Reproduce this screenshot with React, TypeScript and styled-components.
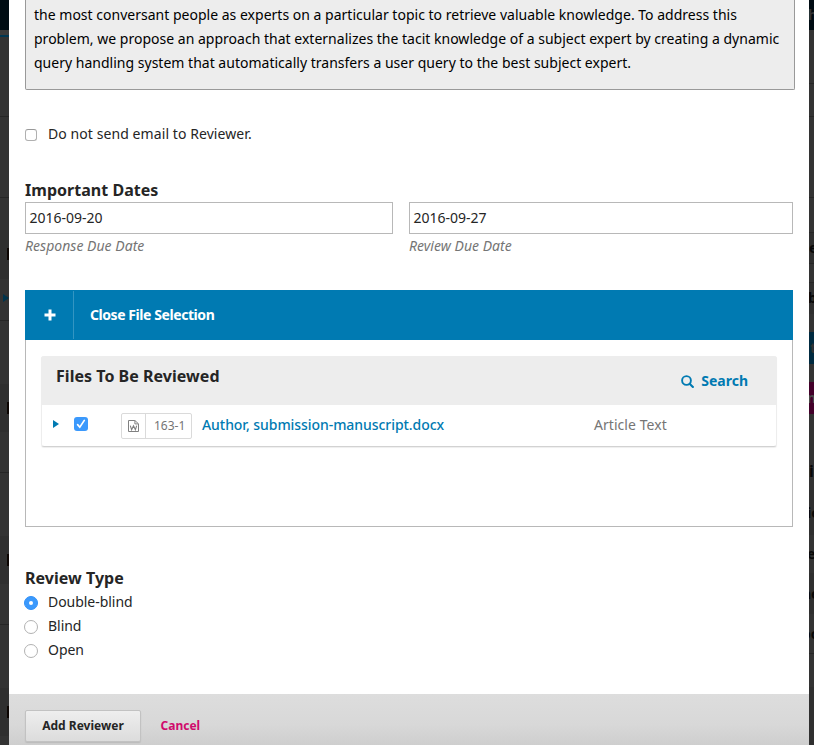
import React from "react";
import styled, { createGlobalStyle } from "styled-components";

const Global = createGlobalStyle`
  *, *::before, *::after { box-sizing: border-box; }
  html, body { margin: 0; padding: 0; overflow: hidden; }
  body {
    background: #333;
    color: #252525;
    font-family: "Noto Sans", "Open Sans", sans-serif;
    font-size: 14px;
    line-height: 24px;
  }
`;

const Page = styled.div`
  display: grid;
  grid-template-columns: 9px 800px 5px;
  width: 814px;
  height: 745px;
  overflow: hidden;
`;

const Edge = styled.div`
  display: flex;
  flex-direction: column;
  height: 745px;
  overflow: hidden;
`;

const Band = styled.div<{ $h: number; $bg?: string; $line?: boolean; $fg?: string; $indent?: number; $shift?: number; $lift?: number; $size?: number }>`
  flex: none;
  display: flex;
  align-items: center;
  height: ${(p) => p.$h}px;
  padding-left: ${(p) => p.$indent ?? 0}px;
  padding-bottom: ${(p) => p.$lift ?? 0}px;
  text-indent: ${(p) => p.$shift ?? 0}px;
  background: ${(p) => p.$bg ?? "#333"};
  border-bottom: ${(p) => (p.$line ? "1px solid #262626" : "none")};
  color: ${(p) => p.$fg ?? "#080808"};
  font-size: ${(p) => p.$size ?? 14}px;
  font-weight: 700;
  white-space: nowrap;
  overflow: hidden;
`;

const EdgeMark = styled.span`
  flex: none;
  width: 4px;
  height: 12px;
  background: #0b0401;
`;

const Modal = styled.main`
  display: flex;
  flex-direction: column;
  height: 745px;
  background: #fff;
`;

const Body = styled.div`
  flex: none;
  display: flex;
  flex-direction: column;
  height: 694px;
  padding: 0 14px 0 16px;
`;

const Message = styled.div`
  flex: none;
  height: 90px;
  padding: 3px 8px 0;
  background: #ededed;
  border: 1px solid #999;
  border-top: 0;
  border-radius: 0 0 2px 2px;
  color: #000;
  white-space: nowrap;
  letter-spacing: 0.01px;
`;

const Line = styled.div`
  height: 24px;
`;

const Choice = styled.label<{ $top?: number; $track?: number }>`
  flex: none;
  display: flex;
  align-items: center;
  height: 24px;
  margin-top: ${(p) => p.$top ?? 0}px;
  letter-spacing: ${(p) => p.$track ?? 0}px;
`;

const Checkbox = styled.span`
  width: 12px;
  height: 12px;
  margin: 2px 11px 0 0;
  background: #fff;
  border: 1px solid #b0b0b0;
  border-top-color: #999;
  border-radius: 3px;
`;

const Radio = styled.span<{ $on?: boolean }>`
  display: grid;
  place-items: center;
  width: 14px;
  height: 14px;
  margin: 2px 10px 0 -1px;
  background: ${(p) => (p.$on ? "#3b99fc" : "#fff")};
  border: 1px solid ${(p) => (p.$on ? "#3190f8" : "#b2b2b2")};
  border-radius: 50%;

  &::after {
    content: "";
    width: 4px;
    height: 4px;
    border-radius: 50%;
    background: #fff;
  }
`;

const Heading = styled.h3<{ $top?: number }>`
  flex: none;
  height: 24px;
  margin: ${(p) => p.$top ?? 0}px 0 0;
  font-size: 16px;
  line-height: 24px;
  font-weight: 700;
  letter-spacing: 0.03px;
`;

const Dates = styled.div`
  flex: none;
  display: grid;
  grid-template-columns: 368px 384px;
  column-gap: 16px;
`;

const DateInput = styled.div`
  height: 32px;
  padding: 0 3.5px;
  border: 1px solid #b8b8b8;
  line-height: 30px;
`;

const Hint = styled.div`
  height: 24px;
  font-style: italic;
  color: #757575;
  letter-spacing: 0.03px;
`;

const Selection = styled.section`
  flex: none;
  width: 768px;
  height: 237px;
  margin-top: 32px;
  border: 1px solid #b8b8b8;
  border-top: 0;
`;

const SelectionBar = styled.div`
  display: flex;
  align-items: center;
  height: 50px;
  margin: 0 -1px;
  background: #007ab2;
  color: #fff;
  font-weight: 700;
`;

const PlusCell = styled.span`
  display: flex;
  align-items: center;
  justify-content: center;
  width: 49px;
  height: 48px;
  padding-left: 1px;
  border-right: 1px solid #3395c2;
`;

const BarTitle = styled.span`
  padding-left: 16px;
  letter-spacing: -0.43px;
`;

const FileGrid = styled.div`
  width: 736px;
  height: 91px;
  margin: 16px 0 0 15px;
  border: 1px solid #ededed;
  border-top: 0;
  border-bottom-color: #d2d2d2;
  border-radius: 3px;
  box-shadow: 0 1px 1px #eee;
`;

const GridHead = styled.div`
  display: flex;
  justify-content: space-between;
  height: 49px;
  margin: 0 -1px;
  padding: 8px 29px 0 15px;
  background: #ededed;
  border-radius: 3px 3px 0 0;
`;

const Search = styled.a`
  display: flex;
  align-items: center;
  height: 24px;
  margin-top: 5px;
  gap: 7px;
  color: #007ab2;
  font-weight: 700;
`;

const FileRow = styled.div`
  display: grid;
  grid-template-columns: 21px 47px 81px 392px 1fr;
  align-items: center;
  height: 38px;
  padding-left: 11px;
`;

const FileBadge = styled.span`
  display: flex;
  align-items: center;
  width: 71px;
  height: 26px;
  margin-top: 3px;
  border: 1px solid #dadada;
  border-radius: 2px;
  color: #757575;
  font-size: 12px;
`;

const BadgeIcon = styled.span`
  display: flex;
  align-items: center;
  justify-content: center;
  width: 24px;
  height: 24px;
  border-right: 1px solid #dadada;
`;

const BadgeId = styled.span`
  padding-left: 8px;
`;

const FileLink = styled.a`
  padding-top: 2px;
  color: #007ab2;
  font-weight: 500;
  letter-spacing: -0.06px;
`;

const Kind = styled.span`
  padding-top: 2px;
  color: #757575;
  letter-spacing: 0.05px;
`;

const Footer = styled.footer`
  flex: none;
  display: flex;
  align-items: flex-start;
  height: 51px;
  padding: 16px;
  background: linear-gradient(#ddd, #d8d8d8 60%, #cecece);
  font-size: 12px;
  font-weight: 700;
`;

const AddButton = styled.button`
  width: 116px;
  height: 32px;
  padding: 0;
  background: linear-gradient(#eee, #dcdcdc);
  border: 1px solid #c2c2c2;
  border-radius: 2px;
  box-shadow: 0 1px 1px #bbb;
  color: #252525;
  font: inherit;
`;

const Cancel = styled.a`
  margin-left: 19.5px;
  line-height: 32px;
  color: #d00a6c;
`;

const Disclosure = ({ color = "#007ab2" }: { color?: string }) => (
  <svg width="6" height="8" viewBox="0 0 6 8" aria-hidden="true">
    <path d="M0 0 6 4 0 8Z" fill={color} />
  </svg>
);

const PlusIcon = () => (
  <svg width="12" height="12" viewBox="0 0 12 12" aria-hidden="true">
    <path d="M4.500.500h3v4h4v3h-4v4h-3v-4h-4v-3h4z" fill="#fff" />
  </svg>
);

const SearchIcon = () => (
  <svg width="13" height="13" viewBox="0 0 13 13" fill="none" stroke="#007ab2" aria-hidden="true">
    <circle cx="5.500" cy="5.500" r="4.400" strokeWidth="1.900" />
    <path d="m8.900 8.900 3 3" strokeWidth="2.100" strokeLinecap="round" />
  </svg>
);

const CheckedBox = () => (
  <svg width="14" height="14" viewBox="0 0 14 14" aria-hidden="true">
    <rect width="14" height="14" rx="3" fill="#3b99fc" />
    <path d="m3.600 7.600 2.200 2.600 4.500-6.800" fill="none" stroke="#fff" strokeWidth="1.700" strokeLinecap="round" />
  </svg>
);

const WordIcon = () => (
  <svg width="11" height="12" viewBox="0 0 11 12" fill="none" stroke="#808080" aria-hidden="true">
    <path d="M.500.500h6.400l3.600 3.300v7.700H.500zM6.900.700v3.200h3.400" />
    <path d="m2.300 5.700 1.300 4 1.900-3.900 1.900 3.900 1.300-4" strokeWidth="1.100" />
  </svg>
);

const lines = [
  "the most conversant people as experts on a particular topic to retrieve valuable knowledge. To address this",
  "problem, we propose an approach that externalizes the tacit knowledge of a subject expert by creating a dynamic",
  "query handling system that automatically transfers a user query to the best subject expert.",
];

const reviewTypes = ["Double-blind", "Blind", "Open"];

export default function App() {
  return (
    <>
      <Global />
      <Page>
        <Edge>
          <Band $h={30} $bg="#000c13" />
          <Band $h={5} $bg="#3a3a3a" />
          <Band $h={2} $bg="#003752" />
          <Band $h={80} $line />
          <Band $h={81} $line />
          <Band $h={32} />
          <Band $h={49} $bg="#2f2f2f" $indent={7} $lift={1}><EdgeMark /></Band>
          <Band $h={42} $line $indent={3} $lift={3}><Disclosure color="#00344c" /></Band>
          <Band $h={63} />
          <Band $h={48} $bg="#2f2f2f" $indent={7}><EdgeMark /></Band>
          <Band $h={41} $line />
          <Band $h={63} />
          <Band $h={48} $bg="#2f2f2f" $indent={7}><EdgeMark /></Band>
          <Band $h={41} $line />
          <Band $h={63} />
          <Band $h={48} $bg="#2f2f2f" $indent={7}><EdgeMark /></Band>
          <Band $h={9} />
        </Edge>
        <Modal>
          <Body>
            <Message>
              {lines.map((line) => <Line key={line}>{line}</Line>)}
            </Message>
            <Choice $top={32} $track={0.08}><Checkbox />Do not send email to Reviewer.</Choice>
            <Heading $top={32}>Important Dates</Heading>
            <Dates>
              <div>
                <DateInput>2016-09-20</DateInput>
                <Hint>Response Due Date</Hint>
              </div>
              <div>
                <DateInput>2016-09-27</DateInput>
                <Hint>Review Due Date</Hint>
              </div>
            </Dates>
            <Selection>
              <SelectionBar>
                <PlusCell><PlusIcon /></PlusCell>
                <BarTitle>Close File Selection</BarTitle>
              </SelectionBar>
              <FileGrid>
                <GridHead>
                  <Heading>Files To Be Reviewed</Heading>
                  <Search><SearchIcon />Search</Search>
                </GridHead>
                <FileRow>
                  <Disclosure />
                  <CheckedBox />
                  <FileBadge>
                    <BadgeIcon><WordIcon /></BadgeIcon>
                    <BadgeId>163-1</BadgeId>
                  </FileBadge>
                  <FileLink>Author, submission-manuscript.docx</FileLink>
                  <Kind>Article Text</Kind>
                </FileRow>
              </FileGrid>
            </Selection>
            <Heading $top={39}>Review Type</Heading>
            {reviewTypes.map((type, i) => (
              <Choice key={type} $track={-0.04}><Radio $on={i === 0} />{type}</Choice>
            ))}
          </Body>
          <Footer>
            <AddButton>Add Reviewer</AddButton>
            <Cancel>Cancel</Cancel>
          </Footer>
        </Modal>
        <Edge>
          <Band $h={30} $bg="#000c13" $fg="#333" $shift={-1}>h</Band>
          <Band $h={54} $line />
          <Band $h={33} $line />
          <Band $h={81} $line />
          <Band $h={35} $line />
          <Band $h={31} $bg="#2f2f2f" $line>e</Band>
          <Band $h={19} $line />
          <Band $h={31} $bg="#2f2f2f" $lift={2} $shift={-1}>b</Band>
          <Band $h={18} />
          <Band $h={32} $bg="#002a40" $fg="#333" $shift={1}>t</Band>
          <Band $h={18} />
          <Band $h={32} $bg="#43002a" $fg="#4a4a4a" $shift={-2}>n</Band>
          <Band $h={38} />
          <Band $h={38} $size={16}>i</Band>
          <Band $h={45} $bg="#2f2f2f" $shift={-2}>ie</Band>
          <Band $h={38} $shift={-2}>e</Band>
          <Band $h={41} $bg="#2f2f2f" $shift={-7}>ne</Band>
          <Band $h={40} $line $shift={-7}>oo</Band>
          <Band $h={33} />
          <Band $h={58} $bg="#2f2f2f" />
        </Edge>
      </Page>
    </>
  );
}
